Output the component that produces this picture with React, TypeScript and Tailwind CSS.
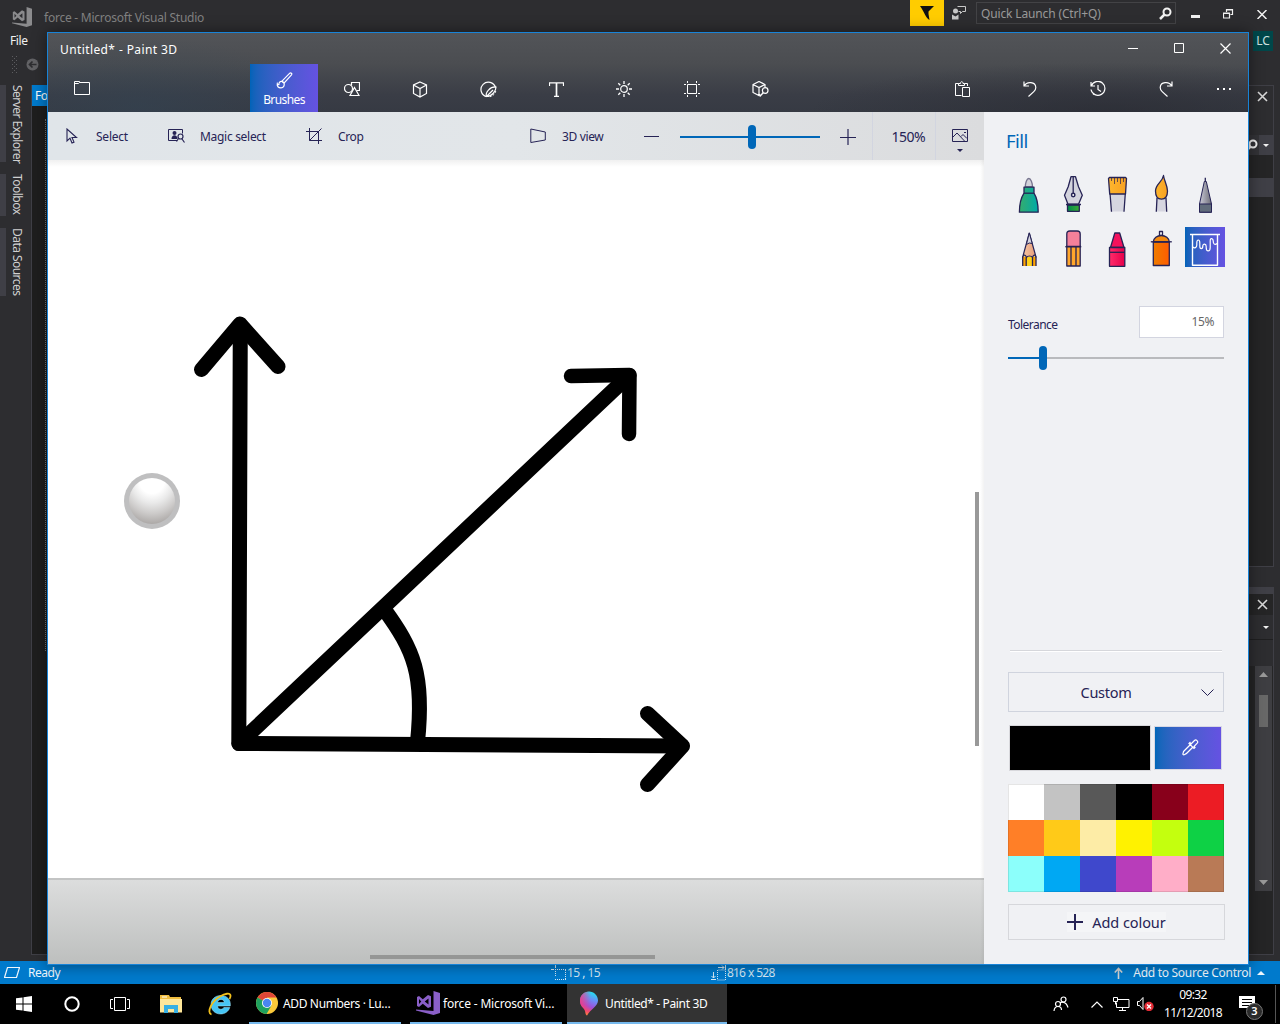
import React from "react";

type IconProps = { w: number; h?: number; className?: string; children: React.ReactNode; vb?: string };

/** Small line-drawing wrapper: strokes follow the current text colour. */
function Icon({ w, h = w, className = "", children, vb }: IconProps) {
  return (
    <svg
      width={w}
      height={h}
      viewBox={vb ?? `0 0 ${w} ${h}`}
      fill="none"
      stroke="currentColor"
      strokeWidth="1"
      className={`shrink-0 ${className}`}
    >
      {children}
    </svg>
  );
}

const INK = "#262355";

/* ---------- Visual Studio (background window) ---------- */

function VsLogo({ color, w, h }: { color: string; w: number; h: number }) {
  return (
    <svg width={w} height={h} viewBox="0 0 24 24" fill={color} className="shrink-0">
      <path d="M17.500 0l6.500 2v20l-6.500 2L0 19.500v-1l17.500 1.500z" />
      <path fillRule="evenodd" d="M1 6l2-1 3.800 3.300L12 4l3 1.300v10.400L12 17 6.800 12.700 3 16l-2-1zM3 8v5L5.300 10.500zM8.700 10.500l3.800 3V7.500z" />
    </svg>
  );
}

function VsTitleBar() {
  return (
    <div className="flex h-[32px] items-start">
      <div className="flex h-[34px] w-[44px] items-center pl-[12px]">
        <VsLogo color="#8b8b8d" w={20} h={20} />
      </div>
      <span className="pt-[9px] text-[12px] leading-[18px] tracking-[-0.02em] text-[#818181]">force - Microsoft Visual Studio</span>
      <div className="ml-auto flex items-start">
        <div className="flex h-[26px] w-[34px] items-center justify-center bg-[#ffcc00]">
          <Icon w={14} h={14}><path d="M0 0h14L8.500 5.500v2.500l1 6C5.500 12 4.500 6 0 0z" fill="#111" stroke="none" /></Icon>
        </div>
        <div className="flex h-[26px] w-[32px] items-center justify-center pr-[2px]">
          <Icon w={16} h={16} className="text-[#c8c8c8]">
            <path d="M6.500 1.500h8v5h-3l-2 2v-2h-2" />
            <circle cx="4.500" cy="6" r="2.500" fill="currentColor" stroke="none" />
            <path d="M1 9.500l3.500 2 3-2v5H1z" fill="currentColor" stroke="none" />
          </Icon>
        </div>
        <div className="mt-[2px] flex h-[22px] w-[200px] items-center justify-between border border-[#434346] bg-[#2d2d30] pr-[3px] pl-[4px]">
          <span className="pt-[2px] text-[12px] tracking-[-0.012em] text-[#999]">Quick Launch (Ctrl+Q)</span>
          <Icon w={13} h={13} className="text-[#f1f1f1]">
            <circle cx="8" cy="5" r="3.500" strokeWidth="2" />
            <path d="M5.500 7.500L1 12" strokeWidth="2.500" />
          </Icon>
        </div>
        <div className="flex h-[28px] w-[104px] items-center pl-[2px] text-[#f1f1f1]">
          <div className="flex w-[36px] justify-center"><Icon w={9} h={10}><path d="M0 7.500h9" strokeWidth="3" /></Icon></div>
          <div className="flex w-[32px] justify-center"><Icon w={11} h={10}><path d="M3.500 3V.5h6v5H7.500M3 1h7M.5 4v5h6V4zM0 4.500h7" strokeWidth="1.200" /></Icon></div>
          <div className="flex w-[37px] justify-center"><Icon w={10} h={9}><path d="M.5 0l9 9M9.500 0l-9 9" strokeWidth="1.500" /></Icon></div>
        </div>
      </div>
    </div>
  );
}

function SideTab({ label, height }: { label: string; height: string }) {
  return (
    <div className={`flex w-[31px] border-l-[6px] border-[#3f3f46] ${height}`}>
      <span className="ml-[3px] text-[12px] leading-[16px] tracking-[-0.045em] whitespace-nowrap text-[#d0d0d0] [writing-mode:vertical-rl]">{label}</span>
    </div>
  );
}

function VisualStudio() {
  return (
    <div className="flex h-[984px] flex-col overflow-hidden bg-[#2d2d30]">
      <VsTitleBar />
      <div className="flex h-[20px] items-center justify-between pr-[7px] pl-[10px]">
        <span className="pb-[2px] text-[12px] tracking-[-0.03em] text-[#f1f1f1]">File</span>
        <span className="mt-[-2px] flex h-[20px] w-[20px] items-center justify-center bg-[#00474a] text-[12px] text-[#cfe0e0]">LC</span>
      </div>
      <div className="flex h-[33px] items-start pt-[4px] pl-[12px]">
        <Icon w={6} h={18} className="text-[#5c5c5f]">
          <path d="M.5 0v18M4.500 0v18" strokeDasharray="1 3" />
          <path d="M2.500 2v16" strokeDasharray="1 3" />
        </Icon>
        <Icon w={13} h={13} className="mt-[2px] ml-[8px] text-[#2d2d30]">
          <circle cx="6.500" cy="6.500" r="6" fill="#626265" stroke="none" />
          <path d="M10.500 6.500H3.500M6.500 3.500l-3 3 3 3" strokeWidth="1.700" />
        </Icon>
      </div>
      <div className="flex h-[876px]">
        <div className="flex w-[31px] flex-col">
          <SideTab label="Server Explorer" height="h-[77px]" />
          <div className="h-[12px]" />
          <SideTab label="Toolbox" height="h-[42px]" />
          <div className="h-[12px]" />
          <SideTab label="Data Sources" height="h-[68px]" />
        </div>
        <div className="h-[870px] w-[40px] border-b border-l border-[#3f3f46] bg-[#1e1e1e]">
          <div className="h-[21px] bg-[#007acc] pl-[3px] text-[12px] leading-[21px] tracking-[-0.05em] text-white">Form1</div>
          <div className="mt-[13px] ml-[13px] h-[532px] border-l border-dotted border-[#777]" />
        </div>
        <div className="ml-auto flex w-[80px] flex-col pr-[6px]">
          <div className="h-[482px] border border-[#3f3f46] bg-[#252526]">
            <div className="flex h-[49px] items-start justify-end bg-[#2d2d30] pt-[5px] pr-[5px] text-[#d8d8d8]">
              <Icon w={11} h={11}><path d="M1 1l9 9M10 1l-9 9" strokeWidth="1.600" /></Icon>
            </div>
            <div className="flex h-[20px] items-center justify-end bg-[#333337] text-[#f1f1f1]">
              <Icon w={12} h={12} className="mr-px"><circle cx="7" cy="5" r="3.500" strokeWidth="2" /><path d="M4.500 7.500L1 11" strokeWidth="2.500" /></Icon>
              <span className="flex h-[20px] w-[14px] items-center justify-center bg-[#3f3f46]"><Icon w={6} h={3}><path d="M0 0h6L3 3z" fill="currentColor" stroke="none" /></Icon></span>
            </div>
            <div className="mt-[23px] h-[19px] bg-[#3f3f46]" />
          </div>
          <div className="mt-[20px] flex h-[368px] flex-col border-r border-b border-[#3f3f46] bg-[#252526]">
            <div className="h-[7px] bg-[#3f3f46]" />
            <div className="flex h-[21px] items-center justify-end bg-[#252526] pr-[5px] pb-px text-[#d8d8d8]"><Icon w={11} h={11}><path d="M1 1l9 9M10 1l-9 9" strokeWidth="1.600" /></Icon></div>
            <div className="flex h-[25px] items-center justify-end border-b border-[#1f1f20] bg-[#2d2d30] pr-[4px] text-[#f1f1f1]"><Icon w={6} h={3}><path d="M0 0h6L3 3z" fill="currentColor" stroke="none" /></Icon></div>
            <div className="h-[26px] bg-[#2d2d30]" />
            <div className="flex h-[225px] justify-end pr-[1px]">
              <div className="flex w-[17px] flex-col items-center bg-[#3e3e42] py-[6px] text-[#999]">
                <Icon w={9} h={5}><path d="M0 5h9L4.500 0z" fill="currentColor" stroke="none" /></Icon>
                <div className="mt-[18px] h-[32px] w-[9px] bg-[#686868]" />
                <Icon w={9} h={5} className="mt-auto"><path d="M0 0h9L4.500 5z" fill="currentColor" stroke="none" /></Icon>
              </div>
            </div>
          </div>
        </div>
      </div>
      <div className="flex h-[23px] items-center bg-[#007acc] text-[12px] text-[#eef6fc]">
        <div className="flex w-[551px] items-center pl-[4px]">
          <Icon w={16} h={11}><path d="M3.500.5h12l-3 10h-12z" strokeWidth="1.200" /></Icon>
          <span className="ml-[8px] tracking-[-0.04em]">Ready</span>
        </div>
        <div className="flex w-[160px] items-center text-[#d4e8f5]">
          <Icon w={16} h={16}><path d="M4.500 0v12M0 4.500h15.500M14.500 5v10M4 14.500h11" strokeDasharray="1 1" /><path d="M4.500 0v3M0 4.500h3" /></Icon>
          <span className="tracking-[-0.045em]">15 , 15</span>
        </div>
        <div className="flex items-center text-[#d4e8f5]">
          <Icon w={16} h={16}><path d="M6.500 5v10h8v-10h-8" strokeDasharray="1 1" /><path d="M7 2.500h6M11 .5l2 2-2 2M14.500 0v5M2.500 7v6M.5 11l2 2 2-2M0 14.500h5" /></Icon>
          <span className="tracking-[-0.07em] [word-spacing:0.05em]">816 x 528</span>
        </div>
        <div className="ml-auto flex items-center pr-[15px]">
          <Icon w={9} h={12} className="text-[#d4d4d4]"><path d="M4.500 12V2M.8 5.500L4.500 1.500 8.200 5.500" strokeWidth="1.600" /></Icon>
          <span className="ml-[10px] tracking-[-0.023em]">Add to Source Control</span>
          <Icon w={8} h={4} className="ml-[6px]"><path d="M0 4h8L4 0z" fill="currentColor" stroke="none" /></Icon>
        </div>
      </div>
    </div>
  );
}

/* ---------- Paint 3D ---------- */

function PaintTitleBar() {
  return (
    <div className="flex h-[31px] items-center text-white">
      <span className="ml-[12px] pt-[2px] text-[12px] tracking-[0.033em]">Untitled* - Paint 3D</span>
      <div className="ml-auto flex">
        <div className="flex w-[46px] justify-center"><Icon w={10} h={10}><path d="M0 5.500h10" /></Icon></div>
        <div className="flex w-[46px] justify-center"><Icon w={10} h={10}><path d="M.5.5h9v9h-9z" /></Icon></div>
        <div className="flex w-[46px] justify-center"><Icon w={11} h={11}><path d="M.5.5l10 10M10.500.5l-10 10" strokeWidth="1.200" /></Icon></div>
      </div>
    </div>
  );
}

function ToolCell({ children, narrow }: { children: React.ReactNode; narrow?: boolean }) {
  return <div className={`flex h-[48px] items-center justify-center pt-[2px] ${narrow ? "w-[48px]" : "w-[68px]"}`}>{children}</div>;
}

function RibbonBar() {
  return (
    <div className="flex h-[48px] text-white">
      <ToolCell><Icon w={16} h={14} className="mb-[3px]"><path d="M.5.5h5v1h10v12H.5zM.5 2.500h4l1-1" /></Icon></ToolCell>
      <div className="ml-[134px] flex h-[48px] w-[68px] flex-col items-center bg-linear-to-r from-[#0063b8] to-[#6552e2]">
        <Icon w={17} h={17} className="mt-[8px]">
          <path d="M6 9.200L13.800 1.200c1-.9 2.600.5 1.700 1.600L8.200 11z" strokeWidth="1.200" />
          <path d="M6 9.500c-2.500-.3-3.300 1.500-3 3-.4.600-1.300 0-1.700-.8-.5 2.500 1 4.200 3.700 4.200 2.500 0 3.800-2.300 3-5z" strokeWidth="1.200" />
        </Icon>
        <span className="mt-[3px] text-[12px] leading-[16px] tracking-[-0.05em]">Brushes</span>
      </div>
      <ToolCell>
        <Icon w={16} h={16}><path d="M7.500 4V1.500h8v8H13" strokeWidth="1.200" /><circle cx="4.500" cy="7.500" r="4" strokeWidth="1.200" /><path d="M10.500 6.500l4.500 8H6z" strokeWidth="1.200" /></Icon>
      </ToolCell>
      <ToolCell>
        <Icon w={16} h={17}><path d="M8 1l6.500 3v8.500L8 16l-6.500-3.500V4zM1.500 4L8 7.500 14.500 4M8 7.500V16" strokeWidth="1.200" /></Icon>
      </ToolCell>
      <ToolCell>
        <Icon w={17} h={17}>
          <path d="M15.500 6.500A7.400 7.400 0 1 0 6.500 15.700" strokeWidth="1.200" />
          <path d="M6.500 15.500c-1.500-4 3.500-10 9.500-9.500 0 4-4 9.500-9.500 9.500zM6.500 15.500L13 9" strokeWidth="1.200" />
          <path d="M15.800 10c-.5 2.500-2.500 5-6 5.800" strokeDasharray="2 1.500" />
        </Icon>
      </ToolCell>
      <ToolCell><Icon w={15} h={15}><path d="M.5 4V.8h14V4M5 14.400h5" strokeWidth="1.200" /><path d="M7.500 1v13" strokeWidth="1.700" /></Icon></ToolCell>
      <ToolCell>
        <Icon w={16} h={16} ><circle cx="8" cy="8" r="3.300" strokeWidth="1.200" /><path d="M8 0v3M8 13v3M0 8h3M13 8h3M2.300 2.300l2 2M11.700 11.700l2 2M2.300 13.700l2-2M11.700 4.300l2-2" strokeWidth="1.300" /></Icon>
      </ToolCell>
      <ToolCell><Icon w={16} h={16}><path d="M3.500 3.500h9v9h-9zM3.500 0v2M12.500 0v2M3.500 14v2M12.500 14v2M0 3.500h2M0 12.500h2M14 3.500h2M14 12.500h2" /></Icon></ToolCell>
      <ToolCell>
        <Icon w={17} h={16}><path d="M8.500 13.800l-1.500.7L1 11.500V3.500l6-3 6 3V6M1 3.500l6 3 6-3M7 6.500v8" strokeWidth="1.200" /><circle cx="13.200" cy="9.500" r="2.800" strokeWidth="1.200" /><path d="M11.200 11.700l-3.500 3.800" strokeWidth="1.400" /></Icon>
      </ToolCell>
      <div className="ml-auto flex">
        <ToolCell><Icon w={15} h={16} className="ml-px"><path d="M6.500 14.500h-6v-12h3M9.500 2.500h3V5M3.500 4.500v-2h2c0-2.500 2.500-2.500 2.500 0h1.500v2zM7.500 6.500h7v9h-7z" /></Icon></ToolCell>
        <ToolCell><Icon w={14} h={16}><path d="M1 .5V5h5M1.200 5C4 0 12.500.7 12.800 6.500c0 1.800-.7 2.900-2 4.100L5.500 15.500" strokeWidth="1.200" /></Icon></ToolCell>
        <ToolCell><Icon w={16} h={16}><path d="M1 1v4h4M1.300 5A7 7 0 1 1 1 8.500M8 4v4.500l3 2" strokeWidth="1.200" /><path d="M3 12.500l1 1" strokeWidth="1.200" /></Icon></ToolCell>
        <ToolCell><Icon w={14} h={16}><path d="M13 .5V5H8M12.800 5C10 0 1.500.7 1.200 6.500c0 1.800.7 2.900 2 4.100L8.500 15.500" strokeWidth="1.200" /></Icon></ToolCell>
        <ToolCell narrow><Icon w={16} h={4}><path d="M1 2h2M7 2h2M13 2h2" strokeWidth="2" /></Icon></ToolCell>
      </div>
    </div>
  );
}

function ViewBar() {
  return (
    <div className="flex h-[48px] items-center bg-linear-to-r from-[#e0e5e9] via-[#e2e6e9] via-50% to-[#dbdcde] text-[12px] text-[#262355]">
      <div className="flex w-[104px] items-center">
        <div className="flex w-[48px] justify-center"><Icon w={12} h={16}><path d="M1 1v12l3-2.800 2 4.800 2-.9-2-4.600h4.500z" strokeWidth="1.100" /></Icon></div>
        <span className="pt-[2px] tracking-[-0.02em]">Select</span>
      </div>
      <div className="flex w-[138px] items-center">
        <div className="flex w-[48px] justify-center">
          <Icon w={17} h={14}>
            <path d="M9 11.500H.5V.5h14v4" /><circle cx="6.500" cy="4" r="2" fill={INK} stroke="none" /><path d="M3.500 10c0-5 6-5 6 0z" fill={INK} stroke="none" />
            <circle cx="12.500" cy="7.500" r="2.500" strokeWidth="1.200" /><path d="M10.500 9.500l-2 3M14 10l2.500 3.500" strokeWidth="1.200" />
          </Icon>
        </div>
        <span className="pt-[2px] tracking-[-0.025em]">Magic select</span>
      </div>
      <div className="flex w-[224px] items-center">
        <div className="flex w-[48px] justify-center"><Icon w={16} h={16}><path d="M3.500 0v12.500H16M0 3.500h12.500V16M3.500 12.500L15.500.5" /></Icon></div>
        <span className="pt-[2px] tracking-[-0.03em]">Crop</span>
      </div>
      <div className="flex w-[114px] items-center">
        <div className="flex w-[48px] justify-center"><Icon w={16} h={16}><path d="M.8 1l14.500 3v8L.8 14.500z" /></Icon></div>
        <span className="pt-[2px] tracking-[-0.03em]">3D view</span>
      </div>
      <div className="flex w-[46px] justify-center"><Icon w={15} h={3}><path d="M0 1.500h15" /></Icon></div>
      <div className="ml-[6px] grid w-[140px] items-center [&>*]:col-start-1 [&>*]:row-start-1">
        <div className="mt-[2px] h-[2px] bg-[#0067b8]" />
        <div className="mt-[1px] ml-[68px] h-[24px] w-[8px] rounded-full bg-[#0067b8]" />
      </div>
      <div className="ml-[4px] flex w-[48px] justify-center pt-[2px]"><Icon w={16} h={16}><path d="M0 8.500h16" /><path d="M8 0v16" strokeWidth="1.200" /></Icon></div>
      <div className="flex h-[48px] w-[64px] items-center justify-end border-x border-[#d2d5e0] pt-px pr-[10px] text-[14px] tracking-[-0.04em]">150%</div>
      <div className="flex w-[48px] flex-col items-center pt-[8px]">
        <Icon w={16} h={13}><path d="M.5.5h15v12H.5zM1 8l4-4 7.500 8M9 7.500l2-2 4 4M12 3.500h2" /></Icon>
        <Icon w={6} h={3} className="mt-[7px]"><path d="M0 0h6L3 3z" fill={INK} stroke="none" /></Icon>
      </div>
    </div>
  );
}

function Stage() {
  return (
    <div className="relative h-[804px] w-[936px] bg-white">
      <div className="absolute inset-x-0 bottom-0 h-[86px] border-t-2 border-[#c3c4c4] bg-linear-to-b from-[#dcdddd] to-[#bdbfbe]" />
      <svg width="936" height="718" viewBox="48 160 936 718" className="absolute top-0 left-0" fill="none" stroke="#000" strokeWidth="15" strokeLinecap="round" strokeLinejoin="round">
        <path d="M240.300 325L238.800 743.500L682 746" />
        <path d="M239 743.500L629 375.500" />
        <path d="M201.500 369.500L240 324L278 366.500" />
        <path d="M571 376L629.500 375L629 434" strokeWidth="14.500" />
        <path d="M647.500 713.500L682.500 746L647.500 784.500" />
        <path d="M384 609C414 650 424.500 675 417.500 742" strokeLinecap="butt" />
      </svg>
      <div className="absolute top-[313px] left-[76px] h-[56px] w-[56px] rounded-full bg-[#bfbfc0] p-[5px]">
        <div className="h-full w-full rounded-full bg-[radial-gradient(ellipse_90%_105%_at_50%_0%,#fff_0%,#fff_32%,#e9e9e9_52%,#cccac9_74%,#a5a19f_100%)]" />
      </div>
      <div className="absolute inset-x-0 top-0 h-[7px] bg-linear-to-b from-[#f0f0f0] to-white" />
      <div className="absolute inset-y-0 right-0 w-[4px] bg-linear-to-r from-transparent to-black/5" />
      <div className="absolute top-[332px] left-[927px] h-[254px] w-[4px] bg-[#999]" />
      <div className="absolute top-[795px] left-[322px] h-[4px] w-[285px] bg-[#959695]" />
    </div>
  );
}

function Brush({ children, active }: { children: React.ReactNode; active?: boolean }) {
  return (
    <div className={active ? "bg-linear-to-r from-[#0063b8] to-[#6552e2]" : ""}>
      <svg width="40" height="40" viewBox="0 0 40 40" fill="none" stroke={active ? "#fff" : INK} strokeWidth="1.300" strokeLinejoin="round">
        {children}
      </svg>
    </div>
  );
}

function BrushGrid() {
  return (
    <div className="ml-[1px] grid w-[216px] grid-cols-[repeat(5,40px)] gap-x-[4px] gap-y-[14px]">
      <svg width="0" height="0" className="absolute">
        <defs>
          <linearGradient id="teal"><stop stopColor="#35ad6d" /><stop offset="1" stopColor="#00aaa8" /></linearGradient>
          <linearGradient id="green"><stop stopColor="#008b4b" /><stop offset="1" stopColor="#3bab35" /></linearGradient>
          <linearGradient id="amber"><stop stopColor="#fdb62e" /><stop offset="1" stopColor="#f8a020" /></linearGradient>
          <linearGradient id="steel"><stop stopColor="#c9c9d6" /><stop offset="1" stopColor="#6d6d78" /></linearGradient>
          <linearGradient id="rose"><stop stopColor="#ff2b6a" /><stop offset="1" stopColor="#e6004a" /></linearGradient>
          <linearGradient id="orange"><stop stopColor="#ee7d00" /><stop offset="1" stopColor="#ff5c00" /></linearGradient>
          <linearGradient id="skin"><stop stopColor="#f6c6a2" /><stop offset="1" stopColor="#e59c79" /></linearGradient>
        </defs>
      </svg>
      <Brush>
        <path d="M16.300 14c0-4 1.500-8.500 3.500-8.500s3.700 4.500 3.700 8.500z" fill="#d2d2da" stroke="#77758f" />
        <path d="M15 14.200h10v6c2.500 4 4.200 11 4.200 19H10.400c0-8 2-15 4.600-19z" fill="url(#teal)" />
        <path d="M15 20.200h10" />
      </Brush>
      <Brush>
        <path d="M14.500 32h11.800v6.300H14.500z" fill="url(#green)" />
        <path d="M18 3.700h4.500l3 10 3.800 8.500-3.800 9H15l-3.500-9 3.700-8.500z" fill="#d3d3dd" />
        <path d="M20.200 4v16M13 31.500h15" />
        <circle cx="20.200" cy="22" r="1.700" fill="#fff" strokeWidth="1.500" />
      </Brush>
      <Brush>
        <path d="M13 20.500h15.300l-1.300 18H14.500z" fill="#d6d6e0" stroke="none" />
        <path d="M13 20.500l1.500 18.300M28.300 20.500L27 38.800" />
        <path d="M11.500 5.500l1-1h16l1 1-1 15.500H12.700z" fill="url(#amber)" />
        <path d="M14.500 5v3M17.500 5v6M20.500 5v4M23.500 5v6M26.500 5v4" strokeWidth=".7" />
      </Brush>
      <Brush>
        <path d="M16 25h9l.7 13.500H15.300z" fill="#d6d6e0" stroke="none" />
        <path d="M16 25l-.7 13.800M25 25l.7 13.800" />
        <path d="M22.500 2.500c.5 5 4 10 4 15.500 0 4.500-1.800 8.200-6 8.200s-6-3.700-6-8.200c0-7 7-9 8-15.500z" fill="url(#amber)" />
      </Brush>
      <Brush>
        <path d="M20.300 4.700v4" />
        <path d="M19.300 8.500h2L26.500 31v8.200h-12V31z" fill="url(#steel)" strokeWidth="1" />
        <path d="M14.500 31h12v8.200h-12z" fill="#616c7b" strokeWidth="1" />
      </Brush>
      <Brush>
        <path d="M13.700 29.500h13.200V39H13.700z" fill="#ffa400" stroke="none" />
        <path d="M17 30h6.500v9H17z" fill="#ffd21a" stroke="none" />
        <path d="M20.300 6L27 30c-1-2.500-2.500-2.500-3.500.5-1-2-5-2-6 0-1-3-2.700-3-3.800-.5z" fill="url(#skin)" strokeWidth="1.200" />
        <path d="M20.300 6l2.900 10.500-2.900-.5-2.900 1.500z" fill="#d6d6e0" strokeWidth="1" />
        <path d="M13.700 29.500V39M27 29.500V39M17.200 30.500V39M23.500 30.500V39" />
      </Brush>
      <Brush>
        <path d="M13.800 19h13.400v20H13.800z" fill="#ffa62b" />
        <path d="M18 20v19M23 20v19" />
        <path d="M13.800 19.500V7c0-2 1-3 3-3h7.400c2 0 3 1 3 3v12.500z" fill="#f4809a" />
        <path d="M12.300 19.700h16" />
      </Brush>
      <Brush>
        <path d="M17.800 6h4.900l4.300 14.500H13.500z" fill="#f3125c" />
        <path d="M12.500 20.500h15.300v18.800H12.500z" fill="url(#rose)" />
        <path d="M12.500 25.300h15.300" />
      </Brush>
      <Brush>
        <path d="M18.500 4.500h3v4h-3z" fill="#fff" />
        <path d="M12.300 15c0-4 4-6.500 8-6.500s8 2.500 8 6.500z" fill="#f28a10" />
        <path d="M12.300 15h16v23.500h-16z" fill="url(#orange)" />
        <path d="M9.800 14.800h21" />
      </Brush>
      <Brush active>
        <path d="M5 7.500h30M7.500 7.500v30.700h25V7.500" strokeWidth="1.400" />
        <path d="M7.800 20c1.700 1.500 4 .8 4-2v-2c0-4 3-4 3 0v3c0 3.500 3 3.500 3 0 0-2.500 3.400-2.500 3.400.5v1c0 4.500 4 4.500 4 0v-6.500c0-4 3-2.500 3 0 0 3 1.500 4.500 4 2.500" strokeWidth="1.200" />
      </Brush>
    </div>
  );
}

const SWATCHES = [
  "bg-[#ffffff]", "bg-[#c3c3c3]", "bg-[#585858]", "bg-[#000000]", "bg-[#88001b]", "bg-[#ec1c24]",
  "bg-[#ff7f27]", "bg-[#ffca18]", "bg-[#fdeca6]", "bg-[#fff200]", "bg-[#c4ff0e]", "bg-[#0ed145]",
  "bg-[#8cfffb]", "bg-[#00a8f3]", "bg-[#3f48cc]", "bg-[#b83dba]", "bg-[#ffaec8]", "bg-[#b97a56]",
];

function FillPanel() {
  return (
    <div className="h-[852px] w-[264px] bg-[#f0f1f4] px-[24px] text-[#262355]">
      <h2 className="-ml-[2px] h-[61px] pt-[16px] text-[18.500px] leading-[26px] tracking-[-0.03em] text-[#0067b8]">Fill</h2>
      <BrushGrid />
      <div className="mt-[39px] flex h-[32px] items-center justify-between">
        <span className="pt-[5px] text-[12px] tracking-[-0.045em]">Tolerance</span>
        <div className="flex h-[32px] w-[85px] items-center justify-end border border-[#d3d5e0] bg-white pr-[9px] text-[12px] tracking-[-0.03em] text-[#666]">15%</div>
      </div>
      <div className="grid h-[40px] items-center [&>*]:col-start-1 [&>*]:row-start-1">
        <div className="h-[2px] bg-linear-to-r from-[#0067b8] from-[16%] to-[#b9babd] to-[16%]" />
        <div className="ml-[31px] h-[24px] w-[8px] rounded-full bg-[#0067b8]" />
      </div>
      <div className="mx-[2px] mt-[272px] h-[2px] border-b border-white bg-[#d6d7db]" />
      <div className="mt-[20px] flex h-[40px] items-center border border-[#d0d4de] pr-[9px] pl-[2px]">
        <span className="grow pt-[2px] text-center text-[14.500px] tracking-[-0.02em]">Custom</span>
        <Icon w={13} h={7}><path d="M.5.5l6 6 6-6" /></Icon>
      </div>
      <div className="mt-[13px] mr-[2px] ml-px flex h-[46px] items-center justify-between">
        <div className="h-[46px] w-[142px] border border-[#d8d8dc] bg-black" />
        <div className="flex h-[44px] w-[68px] items-center justify-center border border-[#d8d8e4] bg-linear-to-r from-[#0067b8] to-[#6552e2] pb-[2px] pl-[4px] text-white">
          <Icon w={17} h={17}><path d="M9 5l3.500-3.500c1.500-1.500 4.300.8 2.700 2.700L12 7.500l1 1-1 1-5-5 1-1zM8.500 5.500L2 12c-1 1-.5 1.500-1 2.500s.5 1.500 1.200 1.200C3.500 15 4 15 5 14l6-6" strokeWidth="1.200" /></Icon>
        </div>
      </div>
      <div className="relative mt-[13px] grid h-[108px] grid-cols-6 grid-rows-3 after:absolute after:inset-0 after:border after:border-black/10">
        {SWATCHES.map((c) => <div key={c} className={c} />)}
      </div>
      <div className="mt-[12px] flex h-[36px] w-[217px] items-center justify-center border border-[#d6d7db]">
        <div className="flex items-center gap-[9px] bg-[#f4f5f7]">
          <Icon w={16} h={16}><path d="M0 8h16M8 0v16" strokeWidth="2" /></Icon>
          <span className="text-[14.500px] leading-[20px] tracking-[-0.005em]">Add colour</span>
        </div>
      </div>
    </div>
  );
}

function Paint3D() {
  return (
    <div className="absolute top-[32px] left-[47px] h-[933px] w-[1202px] border border-[#1883d7] shadow-[0_0_14px_rgba(0,0,0,0.45)]">
      <div className="h-[79px] bg-[radial-gradient(ellipse_190px_70px_at_90px_75px,#32455580,transparent),radial-gradient(ellipse_300px_50px_at_1060px_79px,#26272e90,transparent),linear-gradient(to_bottom,#525458_0%,#4b4d51_38%,#3a3d46_78%,#363a43_100%)]">
        <PaintTitleBar />
        <RibbonBar />
      </div>
      <div className="flex">
        <div>
          <ViewBar />
          <Stage />
        </div>
        <FillPanel />
      </div>
    </div>
  );
}

/* ---------- Taskbar ---------- */

function TaskButton({ icon, label, width, active, tight }: { icon: React.ReactNode; label: string; width: string; active?: boolean; tight?: boolean }) {
  return (
    <div className={`flex h-[40px] items-center border-b-2 border-[#76b9ed] ${width} ${active ? "bg-[#333333]" : ""}`}>
      {icon}
      <span className={`pt-[2px] whitespace-nowrap ${tight ? "tracking-[-0.03em]" : "tracking-[-0.014em]"}`}>{label}</span>
    </div>
  );
}

function Taskbar() {
  return (
    <div className="flex h-[40px] items-center bg-black text-[12px] text-white">
      <div className="flex w-[48px] justify-center"><Icon w={16} h={16}><path d="M0 2.300l6.500-.9v6.100H0zM7.500 1.200L16 0v7.500H7.500zM0 8.500h6.500v6.100L0 13.700zM7.500 8.500H16V16l-8.500-1.200z" fill="#fff" stroke="none" /></Icon></div>
      <div className="flex w-[48px] justify-center"><Icon w={16} h={16}><circle cx="8" cy="8" r="6.700" strokeWidth="2" /></Icon></div>
      <div className="flex w-[48px] justify-center"><Icon w={20} h={14}><path d="M4.500.5h11v13h-11zM3 2.500H.5v9H3M17 2.500h2.500v9H17" /></Icon></div>
      <div className="ml-[3px] flex w-[48px] justify-center">
        <Icon w={22} h={18}>
          <path d="M0 0h9l1 2h11v15H0z" fill="#f0bd3f" stroke="none" /><path d="M0 4h22v13.500H0z" fill="#ffe79a" stroke="none" /><path d="M2 2h5" stroke="#fff" /><path d="M4 18V10h14v8h-4v-4H8v4z" fill="#38b0e3" stroke="none" />
        </Icon>
      </div>
      <div className="flex w-[49px] justify-center">
        <Icon w={24} h={24}>
          <path d="M21.800 15.500h-6c-1 2.500-6 2.500-6.300-1.500h12.800c.8-7-4-10.500-9.500-10.500C7.500 3.500 3 7 3 12.500S7 22 12.500 22c4.500 0 8-2.500 9.300-6.500zM9.500 10.500c.5-4 6.500-4.300 6.800 0z" fill="#46c5f5" fillRule="evenodd" stroke="#a8e8ff" strokeWidth=".5" />
          <path d="M3.500 22.500C-2 20.500 4 9 12 4.500c5-3 10-4 10.500-1 .2 1.200-.3 2.500-1 3.500" stroke="#f2c01c" strokeWidth="1.800" />
        </Icon>
      </div>
      <div className="w-[5px]" />
      <TaskButton tight width="w-[152px]" label="ADD Numbers · Lu…" icon={
        <Icon w={22} h={22} className="mr-[5px] ml-[7px]">
          <g stroke="none"><circle cx="11" cy="11" r="11" fill="#fbc93a" /><path d="M11 11L1.500 5.500A11 11 0 0 1 20.500 5.500H11z" fill="#e04638" /><path d="M11 11L1.500 5.500A11 11 0 0 0 10.500 22l5-8.500z" fill="#1ea15e" /><circle cx="11" cy="11" r="5" fill="#fff" /><circle cx="11" cy="11" r="4.200" fill="#4a86f0" /></g>
        </Icon>} />
      <div className="w-[9px]" />
      <TaskButton width="w-[152px]" label="force - Microsoft Vi…" icon={<div className="mr-[3px] ml-[6px]"><VsLogo color="#8a5fc8" w={24} h={24} /></div>} />
      <div className="w-[5px]" />
      <TaskButton active tight width="w-[160px]" label="Untitled* - Paint 3D" icon={
        <svg width="20" height="25" viewBox="0 0 20 25" className="mr-[6px] ml-[12px] shrink-0">
          <defs>
            <linearGradient id="pin" x1=".6" y1="0" x2=".3" y2="1"><stop stopColor="#24dff0" /><stop offset=".3" stopColor="#6b8df8" /><stop offset=".6" stopColor="#a04fd8" /><stop offset=".8" stopColor="#f04a6a" /><stop offset="1" stopColor="#ffb21a" /></linearGradient>
            <linearGradient id="pinSide"><stop stopColor="#ff3a78" stopOpacity=".8" /><stop offset=".6" stopColor="#ff3a78" stopOpacity="0" /></linearGradient>
          </defs>
          <path d="M10 .5c5 0 9 4 9 9 0 6-8 9-11 15-2-1-1-4-3-6.500S1 14 1 9.500c0-5 4-9 9-9z" fill="url(#pin)" />
          <path d="M10 .5c5 0 9 4 9 9 0 6-8 9-11 15-2-1-1-4-3-6.500S1 14 1 9.500c0-5 4-9 9-9z" fill="url(#pinSide)" />
        </svg>} />
      <div className="ml-auto flex h-[40px] items-center">
        <Icon w={16} h={16}><circle cx="10.500" cy="3.500" r="2.500" strokeWidth="1.200" /><circle cx="5" cy="8" r="2.500" strokeWidth="1.200" /><path d="M1 15c.3-3 1.500-4.500 4-4.500S8.500 12 8.500 14M7 7c1-1 6-2 8 4.500" strokeWidth="1.200" /></Icon>
        <Icon w={12} h={7} className="ml-[22px]"><path d="M.5 6.500L6 1l5.500 5.500" strokeWidth="1.200" /></Icon>
        <Icon w={17} h={14} className="ml-[10px]"><path d="M4.500 2.500h11.500v8H3.500v-5M9.500 10.500v3M6 13.500h7M.5 .5h4v4h-4zM2.500 4.500v3" /></Icon>
        <Icon w={17} h={14} className="ml-[7px]"><path d="M.5 4.500h2l3.500-4v12l-3.500-4h-2z" /><circle cx="12" cy="9.500" r="4.700" fill="#e22b35" stroke="none" /><path d="M10 7.500l4 4M14 7.500l-4 4" strokeWidth="1.300" /></Icon>
        <div className="ml-[4px] flex w-[70px] flex-col items-center leading-[18px] tracking-[-0.05em]"><span>09:32</span><span>11/12/2018</span></div>
        <div className="relative ml-[11px] h-[28px] w-[36px]">
          <Icon w={16} h={16} className="absolute top-[6px] left-0"><path d="M0 0h16v12h-4v3l-3-3H0z" fill="#fff" stroke="none" /><path d="M3 3.500h10M3 6.500h10M3 9.500h7" stroke="#000" /></Icon>
          <span className="absolute top-[13px] left-[7px] flex h-[17px] w-[17px] items-center justify-center rounded-full border border-[#777] bg-[#2b2b2b] text-[11px] font-semibold">3</span>
        </div>
        <div className="mr-[4px] h-[38px] w-px bg-[#555]" />
      </div>
    </div>
  );
}

export default function App() {
  return (
    <div className="relative h-[1024px] w-[1280px] overflow-hidden bg-black font-['Noto_Sans','Open_Sans',sans-serif]">
      <VisualStudio />
      <Paint3D />
      <Taskbar />
    </div>
  );
}
